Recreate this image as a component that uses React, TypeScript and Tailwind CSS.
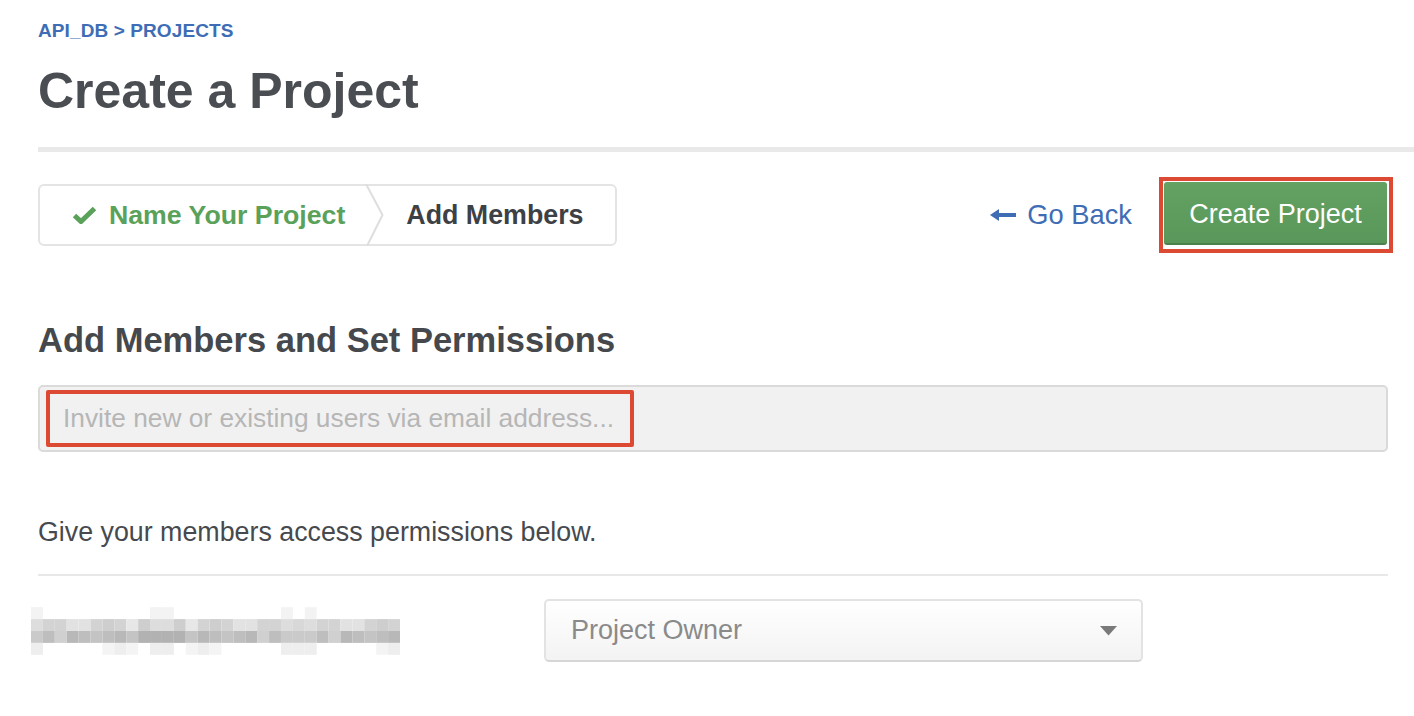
import React from "react";

const font = "font-['Liberation_Sans',Arial,sans-serif]";

// pixelated (blurred-out) member name
const Mosaic: React.FC = () => {
  const cols = 31;
  const rows = 4;
  const cells: React.ReactNode[] = [];
  for (let r = 0; r < rows; r++) {
    for (let c = 0; c < cols; c++) {
      const h = (c * 37 + r * 101 + c * c * 7) % 23;
      let g: number | null = null;
      if (r === 0) g = h % 6 === 0 ? 243 : null;
      if (r === 1) g = 206 + (h % 6) * 5;
      if (r === 2) g = 178 + (h % 7) * 6;
      if (r === 3) g = h % 3 === 0 ? 244 : h % 4 === 0 ? 238 : null;
      if (g === null) continue;
      cells.push(
        <rect
          key={`${r}-${c}`}
          x={c * 12}
          y={r * 12}
          width={12}
          height={12}
          fill={`rgb(${g},${g},${g})`}
        />
      );
    }
  }
  return (
    <svg width={369} height={48} viewBox="0 0 372 48">
      {cells}
    </svg>
  );
};

export default function App() {
  return (
    <div className={`min-h-screen bg-white ${font}`}>
      {/* Header */}
      <div className="pl-[38px] pt-[20px]">
        <div className="text-[19px] leading-[22px] font-bold text-[#3e6db5] tracking-[0.1px]">
          API_DB &gt; PROJECTS
        </div>
        <h1 className="mt-[19px] text-[50px] leading-[60px] font-bold text-[#4a4d51]">
          Create a Project
        </h1>
      </div>
      <div className="ml-[38px] mt-[26px] h-[5px] bg-[#e9e9e9]" />

      <div className="pl-[38px] pr-[26px]">
        {/* Steps + actions */}
        <div className="mt-[25px] -mr-[5px] flex items-center justify-between">
          <div className="flex h-[62px] items-stretch rounded-[6px] border-2 border-[#e4e4e4]">
            <div className="flex items-center pl-[32px] pr-[20px]">
              <svg width="25" height="18" viewBox="0 0 25 18" className="mr-[12px]">
                <path d="M2.5 9.5 L9 15.5 L22.5 2.5" fill="none" stroke="#5aa15a" strokeWidth="5" />
              </svg>
              <span className="text-[26.7px] font-bold text-[#5aa15a]">Name Your Project</span>
            </div>
            <svg width="19" height="62" viewBox="0 0 19 62" className="-my-[2px] h-[62px]">
              <path d="M1 0 L17.5 31 L2 62" fill="none" stroke="#dedede" strokeWidth="2" />
            </svg>
            <div className="flex items-center pl-[22px] pr-[31px]">
              <span className="text-[26.8px] font-bold text-[#3d4044]">Add Members</span>
            </div>
          </div>

          <div className="flex items-center">
            <a className="flex items-center text-[27.3px] text-[#3e6db5]">
              <svg width="26" height="14" viewBox="0 0 26 14" className="mr-[11px]">
                <path d="M0 7 L9 1 L9 13 Z" fill="#3e6db5" />
                <rect x="8" y="5" width="18" height="4" fill="#3e6db5" />
              </svg>
              Go Back
            </a>
            <div className="ml-[27px] border-[4px] border-[#dc4a33] pl-[1px] pr-[2px] pt-[1px] pb-[4px]">
              <button className="h-[63px] w-[223px] rounded-[3px] border-b-2 border-[#4b824b] bg-gradient-to-b from-[#63a263] to-[#5a975a] pt-[3px] text-[27px] text-white">
                Create Project
              </button>
            </div>
          </div>
        </div>

        {/* Members */}
        <h2 className="mt-[67px] text-[34.5px] leading-[40px] font-bold text-[#45484c]">
          Add Members and Set Permissions
        </h2>
        <div className="relative mt-[25px] flex h-[67px] items-center rounded-[5px] border-2 border-[#dadada] bg-[#f1f1f1] pl-[23px]">
          <span className="text-[26.3px] text-[#b6b6b6]">
            Invite new or existing users via email address...
          </span>
          <div className="absolute left-[6px] top-[3px] h-[57px] w-[588px] rounded-[2px] border-[4px] border-[#dc4a33]" />
        </div>

        <p className="mt-[64px] text-[26.8px] leading-[32px] text-[#46494d]">
          Give your members access permissions below.
        </p>
        <div className="mt-[26px] h-[2px] bg-[#e8e8e8]" />

        <div className="mt-[23px] flex items-center">
          <div className="w-[506px]">
            <div className="-ml-[7px]">
              <Mosaic />
            </div>
          </div>
          <div className="flex h-[63px] w-[599px] items-center justify-between rounded-[5px] border-2 border-[#e3e3e3] border-b-[#d6d6d6] bg-gradient-to-b from-white to-[#f3f3f3] pl-[25px] pr-[24px]">
            <span className="text-[27px] text-[#8a8a8a]">Project Owner</span>
            <svg width="17" height="10" viewBox="0 0 17 10">
              <path d="M0 0 L17 0 L8.5 9.5 Z" fill="#7a7a7a" />
            </svg>
          </div>
        </div>
      </div>
    </div>
  );
}
